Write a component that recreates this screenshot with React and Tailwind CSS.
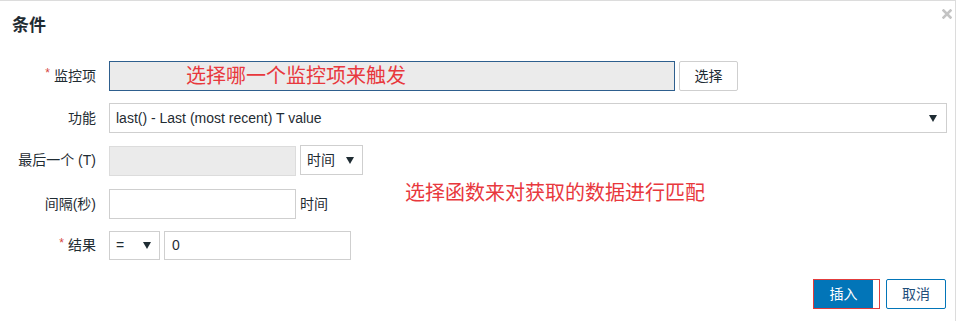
import React from "react";

const font = { fontFamily: '"Liberation Sans", Arial, "Noto Sans CJK SC", sans-serif' };

function Arrow() {
  return (
    <svg width="8" height="7" viewBox="0 0 8 7" className="shrink-0">
      <path d="M0 0 L8 0 L4 7 Z" fill="#1f2c33" />
    </svg>
  );
}

function Label({ children, required }) {
  return (
    <div className="w-[96px] shrink-0 flex justify-end items-center text-[14px] text-[#1f2c33] gap-[4px]">
      {required && <span className="text-[#d64541] text-[12px] -translate-y-[3px]">*</span>}
      <span>{children}</span>
    </div>
  );
}

export default function App() {
  return (
    <div className="w-[960px] h-[321px] bg-white overflow-hidden" style={font}>
      <div className="relative w-[956px] h-[321px] border-t border-r border-[#dcdcdc]">
        <svg className="absolute left-[942px] top-[8px]" width="10" height="10" viewBox="0 0 10 10">
          <path d="M1.5 1.5 L8.5 8.5 M8.5 1.5 L1.5 8.5" stroke="#c4c4c4" strokeWidth="2.6" strokeLinecap="square" />
        </svg>

        <div className="pl-[12px] pt-[13px] text-[17px] font-bold text-[#1f2c33] leading-[24px]">条件</div>

        <div className="mt-[23px] flex flex-col">
          {/* Row 1 */}
          <div className="flex items-center h-[30px]">
            <Label required>监控项</Label>
            <div className="ml-[13px] w-[566px] h-[30px] bg-[#ebebeb] border border-[#2e5f8e] flex items-center pl-[76px]">
              <span className="text-[20px] text-[#e8383d]">选择哪一个监控项来触发</span>
            </div>
            <div className="ml-[4px] w-[59px] h-[30px] bg-white border border-[#cfcfcf] rounded-[2px] flex items-center justify-center text-[14px] text-[#1f2c33]">
              选择
            </div>
          </div>

          {/* Row 2 */}
          <div className="flex items-center h-[30px] mt-[12px]">
            <Label>功能</Label>
            <div className="ml-[13px] w-[838px] h-[30px] bg-white border border-[#cfcfcf] flex items-center justify-between pl-[6px] pr-[9px] text-[14px] text-[#1f2c33]">
              <span>last() - Last (most recent) T value</span>
              <Arrow />
            </div>
          </div>

          {/* Row 3 */}
          <div className="flex items-center h-[31px] mt-[12px]">
            <Label>最后一个 (T)</Label>
            <div className="ml-[13px] w-[187px] h-[30px] bg-[#ebebeb] border border-[#dcdcdc] self-end" />
            <div className="ml-[4px] w-[63px] h-[30px] bg-white border border-[#cfcfcf] flex items-center justify-between pl-[6px] pr-[8px] text-[14px] text-[#1f2c33] self-start">
              <span>时间</span>
              <Arrow />
            </div>
          </div>

          {/* Row 4 */}
          <div className="flex items-center h-[30px] mt-[13px]">
            <Label>间隔(秒)</Label>
            <div className="ml-[13px] w-[187px] h-[30px] bg-white border border-[#cfcfcf]" />
            <span className="ml-[4px] text-[14px] text-[#1f2c33]">时间</span>
          </div>

          {/* Row 5 */}
          <div className="flex items-center h-[29px] mt-[12px]">
            <Label required>结果</Label>
            <div className="ml-[13px] w-[51px] h-[29px] bg-white border border-[#cfcfcf] flex items-center justify-between pl-[6px] pr-[8px] text-[14px] text-[#1f2c33]">
              <span>=</span>
              <Arrow />
            </div>
            <div className="ml-[4px] w-[187px] h-[29px] bg-white border border-[#cfcfcf] flex items-center pl-[7px] text-[14px] text-[#1f2c33]">
              0
            </div>
          </div>
        </div>

        <div className="absolute left-[405px] top-[178px] text-[20px] text-[#e8383d] leading-[28px]">
          选择函数来对获取的数据进行匹配
        </div>

        <div className="mt-[19px] flex justify-end pr-[9px] gap-[6px]">
          <div className="w-[67px] h-[30px] border border-[#e23c3c] flex">
            <div className="w-[59px] h-full bg-[#0275b8] text-white text-[14px] flex items-center justify-center">插入</div>
          </div>
          <div className="w-[60px] h-[30px] bg-white border border-[#0275b8] rounded-[2px] text-[14px] text-[#1f4e7a] flex items-center justify-center">
            取消
          </div>
        </div>
      </div>
    </div>
  );
}
